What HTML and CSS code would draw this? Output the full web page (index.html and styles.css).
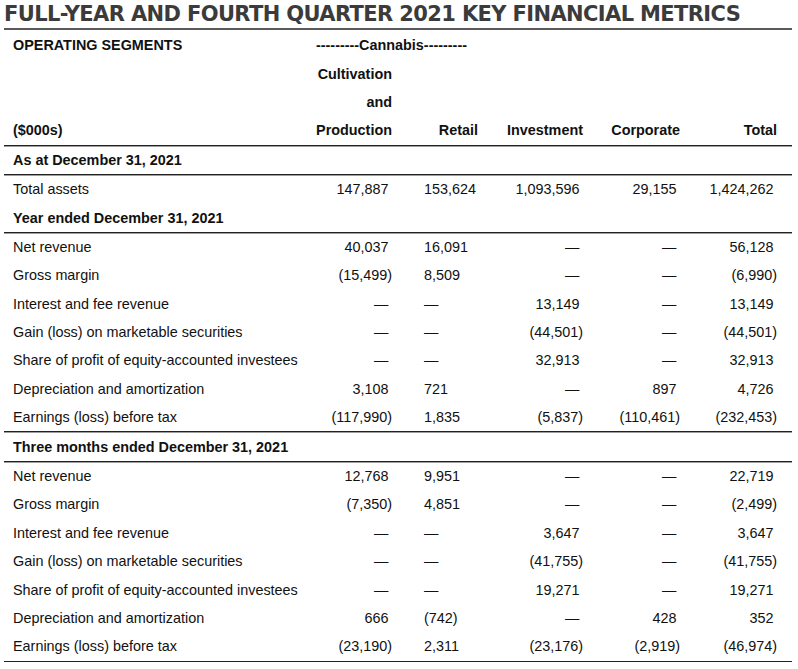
FILE: index.html
```html
<!DOCTYPE html>
<html lang="en">
<head>
<meta charset="utf-8">
<title>Key Financial Metrics</title>
<link rel="stylesheet" href="styles.css">
</head>
<body>
<h1 class="title">FULL-YEAR AND FOURTH QUARTER 2021 KEY FINANCIAL METRICS</h1>
<div class="table">
  <div class="row head">
    <div class="lbl">OPERATING SEGMENTS</div>
    <div class="span">---------Cannabis---------</div>
  </div>
  <div class="row head">
    <div class="lbl"></div>
    <div class="num">Cultivation</div>
  </div>
  <div class="row head">
    <div class="lbl"></div>
    <div class="num">and</div>
  </div>
  <div class="row head rule">
    <div class="lbl">($000s)</div>
    <div class="num">Production</div>
    <div class="num">Retail</div>
    <div class="num">Investment</div>
    <div class="num">Corporate</div>
    <div class="num last">Total</div>
  </div>
  <div class="row section rule">
    <div class="lbl">As at December 31, 2021</div>
  </div>
  <div class="row">
    <div class="lbl">Total assets</div>
    <div class="num p">147,887</div>
    <div class="ret">153,624</div>
    <div class="num p">1,093,596</div>
    <div class="num p">29,155</div>
    <div class="num p last">1,424,262</div>
  </div>
  <div class="row section rule">
    <div class="lbl">Year ended December 31, 2021</div>
  </div>
  <div class="row data">
    <div class="lbl">Net revenue</div>
    <div class="num p">40,037</div>
    <div class="ret">16,091</div>
    <div class="num p">—</div>
    <div class="num p">—</div>
    <div class="num p last">56,128</div>
  </div>
  <div class="row data">
    <div class="lbl">Gross margin</div>
    <div class="num">(15,499)</div>
    <div class="ret">8,509</div>
    <div class="num p">—</div>
    <div class="num p">—</div>
    <div class="num last">(6,990)</div>
  </div>
  <div class="row data">
    <div class="lbl">Interest and fee revenue</div>
    <div class="num p">—</div>
    <div class="ret">—</div>
    <div class="num p">13,149</div>
    <div class="num p">—</div>
    <div class="num p last">13,149</div>
  </div>
  <div class="row data">
    <div class="lbl">Gain (loss) on marketable securities</div>
    <div class="num p">—</div>
    <div class="ret">—</div>
    <div class="num">(44,501)</div>
    <div class="num p">—</div>
    <div class="num last">(44,501)</div>
  </div>
  <div class="row data">
    <div class="lbl">Share of profit of equity-accounted investees</div>
    <div class="num p">—</div>
    <div class="ret">—</div>
    <div class="num p">32,913</div>
    <div class="num p">—</div>
    <div class="num p last">32,913</div>
  </div>
  <div class="row data">
    <div class="lbl">Depreciation and amortization</div>
    <div class="num p">3,108</div>
    <div class="ret">721</div>
    <div class="num p">—</div>
    <div class="num p">897</div>
    <div class="num p last">4,726</div>
  </div>
  <div class="row data rule">
    <div class="lbl">Earnings (loss) before tax</div>
    <div class="num">(117,990)</div>
    <div class="ret">1,835</div>
    <div class="num">(5,837)</div>
    <div class="num">(110,461)</div>
    <div class="num last">(232,453)</div>
  </div>
  <div class="row section rule">
    <div class="lbl">Three months ended December 31, 2021</div>
  </div>
  <div class="row data">
    <div class="lbl">Net revenue</div>
    <div class="num p">12,768</div>
    <div class="ret">9,951</div>
    <div class="num p">—</div>
    <div class="num p">—</div>
    <div class="num p last">22,719</div>
  </div>
  <div class="row data">
    <div class="lbl">Gross margin</div>
    <div class="num">(7,350)</div>
    <div class="ret">4,851</div>
    <div class="num p">—</div>
    <div class="num p">—</div>
    <div class="num last">(2,499)</div>
  </div>
  <div class="row data">
    <div class="lbl">Interest and fee revenue</div>
    <div class="num p">—</div>
    <div class="ret">—</div>
    <div class="num p">3,647</div>
    <div class="num p">—</div>
    <div class="num p last">3,647</div>
  </div>
  <div class="row data">
    <div class="lbl">Gain (loss) on marketable securities</div>
    <div class="num p">—</div>
    <div class="ret">—</div>
    <div class="num">(41,755)</div>
    <div class="num p">—</div>
    <div class="num last">(41,755)</div>
  </div>
  <div class="row data">
    <div class="lbl">Share of profit of equity-accounted investees</div>
    <div class="num p">—</div>
    <div class="ret">—</div>
    <div class="num p">19,271</div>
    <div class="num p">—</div>
    <div class="num p last">19,271</div>
  </div>
  <div class="row data">
    <div class="lbl">Depreciation and amortization</div>
    <div class="num p">666</div>
    <div class="ret">(742)</div>
    <div class="num p">—</div>
    <div class="num p">428</div>
    <div class="num p last">352</div>
  </div>
  <div class="row data rule">
    <div class="lbl">Earnings (loss) before tax</div>
    <div class="num">(23,190)</div>
    <div class="ret">2,311</div>
    <div class="num">(23,176)</div>
    <div class="num">(2,919)</div>
    <div class="num last">(46,974)</div>
  </div>
</div>
</body>
</html>
```

FILE: styles.css
```css
html, body {
  margin: 0;
  padding: 0;
  background: #ffffff;
}

body {
  padding: 0 6px 0 4px;
  font-family: "Liberation Sans", Arial, sans-serif;
  font-size: 14.4px;
  color: #111111;
}

.title {
  margin: 0;
  height: 30px;
  box-sizing: border-box;
  padding-top: 3px;
  border-bottom: 2px solid #5a5a5a;
  font-family: "DejaVu Sans", sans-serif;
  font-weight: 700;
  font-size: 21px;
  line-height: 22px;
  letter-spacing: -0.62px;
  color: #3b3b3b;
  white-space: nowrap;
}

.table {
  display: flex;
  flex-direction: column;
  padding-top: 1px;
}

.row {
  display: grid;
  grid-template-columns: 296px 100px 86px 105px 97px 104px;
  align-items: center;
  height: 28.4px;
}

.row.rule {
  border-bottom: 1px solid #222222;
  box-shadow: 0 1px 0 rgba(40, 40, 40, 0.45);
}

.head,
.section {
  font-weight: 700;
}

.lbl {
  padding-left: 9px;
  white-space: nowrap;
}

.num {
  text-align: right;
  padding-right: 8px;
  white-space: nowrap;
}

.num.last {
  padding-right: 15px;
}

.num.p {
  padding-right: 11.5px;
}

.num.p.last {
  padding-right: 18.5px;
}

.ret {
  padding-left: 24px;
  white-space: nowrap;
}

.span {
  grid-column: 2 / 4;
  text-align: center;
  padding-right: 3px;
  white-space: nowrap;
}
```
